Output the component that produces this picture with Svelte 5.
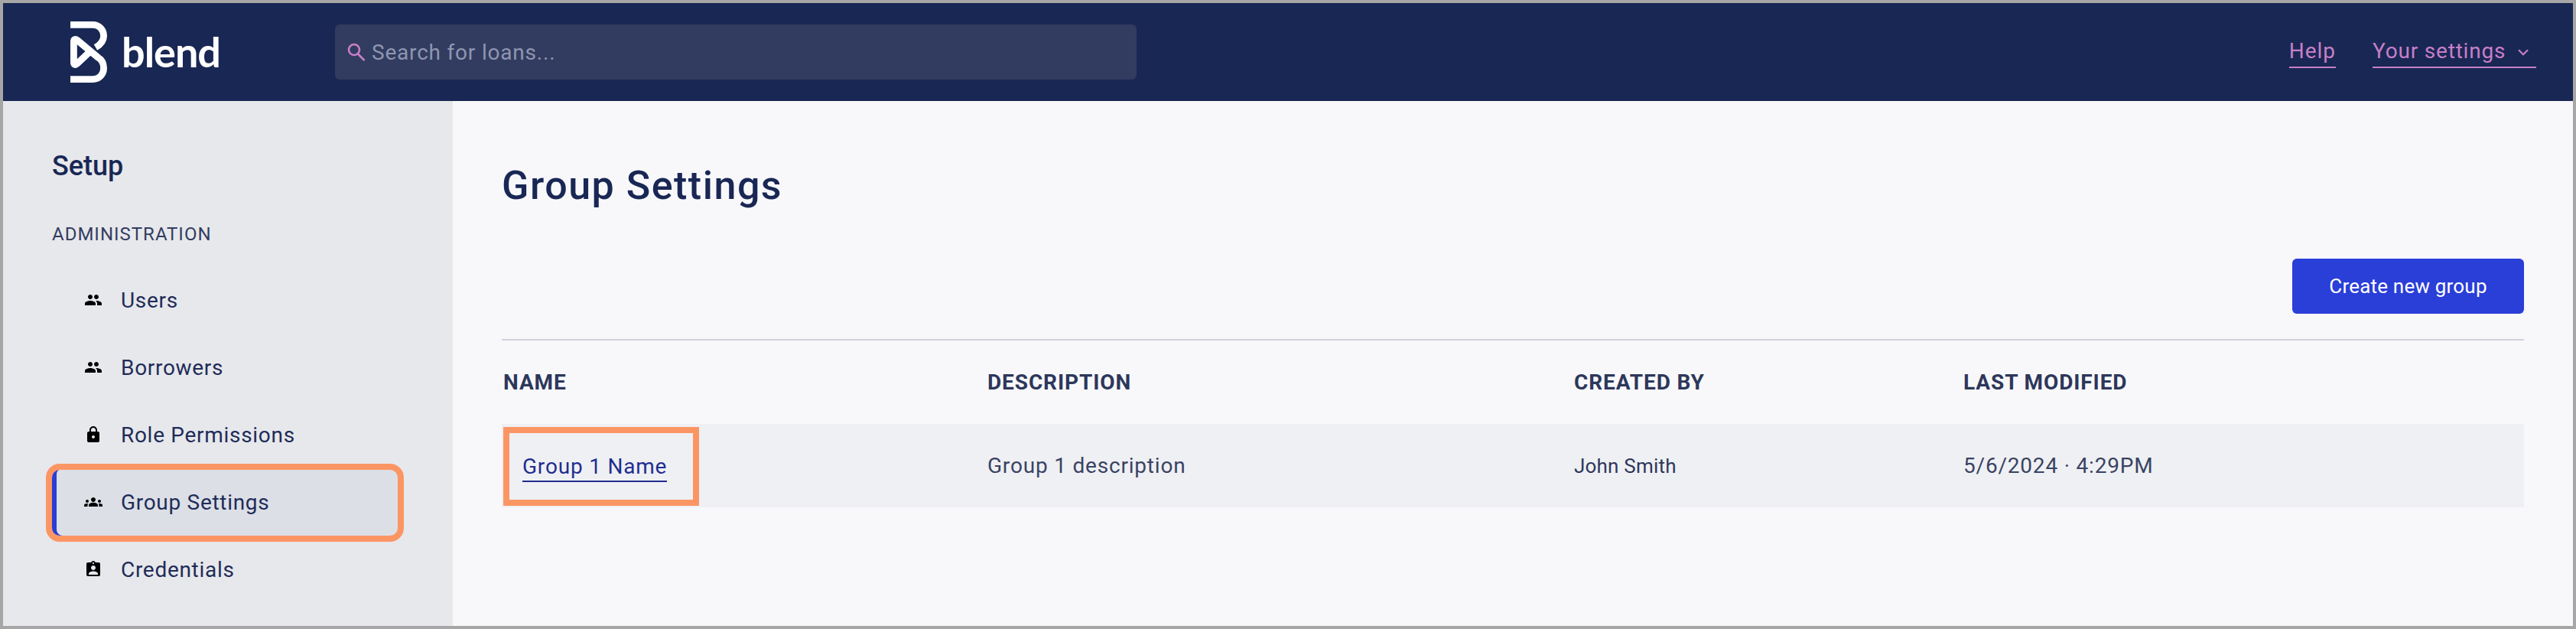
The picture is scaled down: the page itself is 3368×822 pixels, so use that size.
<script>
  const iconPeople = "M16 11c1.66 0 2.99-1.34 2.99-3S17.66 5 16 5c-1.66 0-3 1.34-3 3s1.34 3 3 3zm-8 0c1.66 0 2.99-1.34 2.99-3S9.66 5 8 5C6.34 5 5 6.34 5 8s1.34 3 3 3zm0 2c-2.33 0-7 1.17-7 3.5V19h14v-2.5c0-2.33-4.67-3.5-7-3.5zm8 0c-.29 0-.62.02-.97.05 1.16.84 1.97 1.97 1.97 3.45V19h6v-2.5c0-2.33-4.67-3.5-7-3.5z";
  const iconLock = "M18 8h-1V6c0-2.76-2.24-5-5-5S7 3.24 7 6v2H6c-1.1 0-2 .9-2 2v10c0 1.1.9 2 2 2h12c1.1 0 2-.9 2-2V10c0-1.1-.9-2-2-2zm-6 9c-1.1 0-2-.9-2-2s.9-2 2-2 2 .9 2 2-.9 2-2 2zm3.1-9H8.9V6c0-1.71 1.39-3.1 3.1-3.1 1.71 0 3.1 1.39 3.1 3.1v2z";
  const iconGroups = "M12 12.75c1.63 0 3.07.39 4.24.9 1.08.48 1.76 1.56 1.76 2.73V18H6v-1.61c0-1.18.68-2.26 1.76-2.73 1.17-.52 2.61-.91 4.24-.91zM4 13c1.1 0 2-.9 2-2s-.9-2-2-2-2 .9-2 2 .9 2 2 2zm1.13 1.1c-.37-.06-.74-.1-1.13-.1-.99 0-1.93.21-2.78.58C.48 14.9 0 15.62 0 16.43V18h4.5v-1.61c0-.83.23-1.61.63-2.29zM20 13c1.1 0 2-.9 2-2s-.9-2-2-2-2 .9-2 2 .9 2 2 2zm4 3.43c0-.81-.48-1.53-1.22-1.85-.85-.37-1.79-.58-2.78-.58-.39 0-.76.04-1.13.1.4.68.63 1.46.63 2.29V18H24v-1.57zM12 6c1.66 0 3 1.34 3 3s-1.34 3-3 3-3-1.34-3-3 1.34-3 3-3z";
  const iconBadge = "M19 3h-4.18C14.4 1.84 13.3 1 12 1c-1.3 0-2.4.84-2.82 2H5c-1.1 0-2 .9-2 2v14c0 1.1.9 2 2 2h14c1.1 0 2-.9 2-2V5c0-1.1-.9-2-2-2zm-7 0c.55 0 1 .45 1 1s-.45 1-1 1-1-.45-1-1 .45-1 1-1zm0 4c1.66 0 3 1.34 3 3s-1.34 3-3 3-3-1.34-3-3 1.34-3 3-3zm6 12H6v-1.4c0-2 4-3.1 6-3.1s6 1.1 6 3.1V19z";
  const nav = [
    { label: "Users", icon: iconPeople },
    { label: "Borrowers", icon: iconPeople },
    { label: "Role Permissions", icon: iconLock },
    { label: "Group Settings", icon: iconGroups, active: true },
    { label: "Credentials", icon: iconBadge }
  ];
</script>

<div class="frame">
  <header class="topbar">
    <div class="logo">
      <svg class="mark" width="48" height="80" viewBox="0 0 48 80" fill="none" stroke="#fff" stroke-width="8.8" stroke-linejoin="round">
        <path d="M0 4.4H29C38 4.4 43.6 11 43.6 19C43.6 25 40 30 33 34" />
        <path d="M0 75.6H29C38 75.6 43.6 69 43.6 61C43.6 55 41 50 36 47L9 24.5C6.5 22.5 4.4 23.5 4.4 26.5V53.5C4.4 56.5 6.5 57.5 8.5 55.5L25 40" />
      </svg>
      <span class="wordmark">blend</span>
    </div>
    <div class="search">
      <svg width="24" height="24" viewBox="0 0 24 24" fill="none" stroke="#c77fc8" stroke-width="2.6">
        <circle cx="9" cy="9" r="7" />
        <path d="M14 14.5L22.5 23" />
      </svg>
      <span>Search for loans...</span>
    </div>
    <nav class="toplinks">
      <span class="toplink help">Help</span>
      <span class="toplink settings">
        Your settings
        <svg width="14" height="9" viewBox="0 0 14 9" fill="none" stroke="#c77fc8" stroke-width="2.2"><path d="M1 1.2L7 7.2L13 1.2" /></svg>
      </span>
    </nav>
  </header>

  <div class="body">
    <aside class="sidebar">
      <h2>Setup</h2>
      <div class="section">ADMINISTRATION</div>
      <ul>
        {#each nav as item}
          <li class:active={item.active}>
            <svg width="24" height="24" viewBox="0 0 24 24" fill="#000"><path d={item.icon} /></svg>
            <span>{item.label}</span>
            {#if item.active}<i class="callout-round"></i>{/if}
          </li>
        {/each}
      </ul>
    </aside>

    <main>
      <h1>Group Settings</h1>
      <div class="actions"><button>Create new group</button></div>
      <div class="table">
        <div class="row head">
          <div>NAME</div>
          <div>DESCRIPTION</div>
          <div>CREATED BY</div>
          <div>LAST MODIFIED</div>
        </div>
        <div class="row data">
          <div><a href="#group" class="link">Group 1 Name</a></div>
          <div>Group 1 description</div>
          <div class="creator">John Smith</div>
          <div>5/6/2024 · 4:29PM</div>
          <i class="callout-square"></i>
        </div>
      </div>
    </main>
  </div>
</div>

<style>
  :global(body) { margin: 0; background: #a6a6a6; }
  .frame {
    box-sizing: border-box;
    width: 3368px;
    height: 822px;
    border: 4px solid #a6a6a6;
    display: flex;
    flex-direction: column;
    overflow: hidden;
    font-family: Roboto, "Liberation Sans", sans-serif;
    color: #1b2a57;
    background: #f8f8fb;
  }
  .topbar {
    height: 128px;
    flex: none;
    background: #192754;
    display: flex;
    align-items: center;
  }
  .logo {
    display: flex;
    align-items: center;
    margin-left: 88px;
    width: 346px;
    gap: 19px;
  }
  .mark { flex: none; }
  .wordmark {
    font-family: Lato, sans-serif;
    font-size: 54px;
    font-weight: 700;
    line-height: 60px;
    letter-spacing: -1px;
    color: #fff;
  }
  .search {
    width: 1048px;
    height: 72px;
    background: #323c60;
    border-radius: 6px;
    display: flex;
    align-items: center;
    box-sizing: border-box;
    padding-left: 16px;
    gap: 8px;
    font-size: 28px;
    letter-spacing: 0.8px;
    color: #8f96b0;
  }
  .toplinks {
    margin-left: auto;
    margin-right: 48px;
    display: flex;
    gap: 48px;
    transform: translateY(1px);
  }
  .toplink {
    color: #c77fc8;
    font-size: 28px;
    line-height: 34px;
    letter-spacing: 0.8px;
    padding-bottom: 3px;
    border-bottom: 2px solid #c77fc8;
  }
  .help { letter-spacing: 1px; }
  .settings svg { margin-left: 8px; margin-right: 10px; vertical-align: 3px; }
  .body { flex: 1; display: flex; min-height: 0; }
  .sidebar {
    width: 588px;
    flex: none;
    box-sizing: border-box;
    background: #e7e8ec;
    padding: 63px 72px 0 64px;
  }
  h2 {
    margin: 0;
    font-size: 36px;
    line-height: 44px;
    font-weight: 500;
    color: #192754;
  }
  .section {
    margin-top: 51px;
    font-size: 24px;
    line-height: 32px;
    letter-spacing: 1px;
    color: #333d60;
  }
  ul { list-style: none; margin: 26px 0 0; padding: 0; }
  li {
    position: relative;
    height: 88px;
    box-sizing: border-box;
    padding-left: 42px;
    display: flex;
    align-items: center;
    gap: 24px;
    font-size: 28px;
    letter-spacing: 0.7px;
    color: #1f2c58;
  }
  li.active {
    background: #dcdfe6;
    box-shadow: inset 6px 0 0 #2a3ed8;
    border-radius: 8px;
  }
  .callout-round {
    position: absolute;
    box-sizing: border-box;
    left: -8px;
    right: -8px;
    top: -6px;
    bottom: -8px;
    border: 8px solid #fb9664;
    border-radius: 18px;
  }
  main {
    flex: 1;
    min-width: 0;
    box-sizing: border-box;
    padding: 79px 64px 0;
  }
  h1 {
    margin: 0;
    font-size: 52px;
    line-height: 64px;
    font-weight: 500;
    letter-spacing: 1.5px;
    color: #192754;
  }
  .actions { margin-top: 63px; display: flex; justify-content: flex-end; }
  button {
    width: 303px;
    height: 72px;
    border: 0;
    padding: 0;
    border-radius: 6px;
    background: #2a3ed8;
    color: #fff;
    font-family: inherit;
    font-size: 26px;
    letter-spacing: 0.2px;
  }
  .table { margin-top: 33px; border-top: 2px solid #d0d1da; }
  .row {
    position: relative;
    display: grid;
    grid-template-columns: 635px 767px 509px 1fr;
    align-items: center;
    font-size: 28px;
  }
  .head {
    height: 109px;
    font-weight: 700;
    letter-spacing: 0.9px;
    font-size: 28px;
    color: #2d375a;
  }
  .head > div:first-child { padding-left: 2px; }
  .data {
    height: 109px;
    background: #eff0f4;
    letter-spacing: 0.8px;
    color: #3a4362;
  }
  .creator { font-size: 26px; letter-spacing: 0.2px; color: #2d375a; }
  .link {
    display: inline-block;
    margin-left: 27px;
    line-height: 32px;
    padding: 7px 0 2px;
    border-bottom: 2px solid #1f2e8f;
    color: #1f2e8f;
    text-decoration: none;
  }
  .callout-square {
    position: absolute;
    box-sizing: border-box;
    left: 2px;
    top: 4px;
    width: 256px;
    height: 103px;
    border: 8px solid #fb9664;
  }
</style>
